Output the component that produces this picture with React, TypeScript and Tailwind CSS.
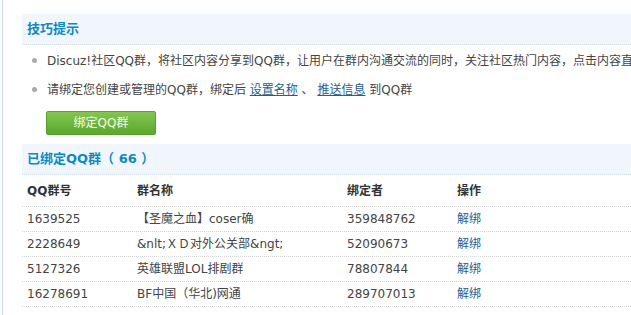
import React from "react";

const rows = [
  { id: "1639525", name: "【圣魔之血】coser确", owner: "359848762" },
  { id: "2228649", name: "&nlt;ＸＤ对外公关部&ngt;", owner: "52090673" },
  { id: "5127326", name: "英雄联盟LOL排剧群", owner: "78807844" },
  { id: "16278691", name: "BF中国（华北)网通", owner: "289707013" },
];

export default function App() {
  return (
    <div
      className="w-[631px] h-[315px] overflow-hidden bg-white text-[12px] text-[#444] whitespace-nowrap"
      style={{ fontFamily: '"DejaVu Sans", Verdana, "Noto Sans CJK SC", sans-serif' }}
    >
      <div className="ml-[2px] h-full border-l border-[#c3dcee] pl-[19px] pt-[14px]">
        <div className="h-[31px] bg-[#f1f6fc] border-b border-dotted border-[#d2e0ee] pl-[5px] flex items-center">
          <span className="text-[13px] font-bold text-[#0b8bbf]">技巧提示</span>
        </div>
        <ul className="pt-[1px]">
          <li className="h-[29px] flex items-center">
            <span className="shrink-0 ml-[10px] w-[5px] h-[5px] rounded-full bg-[#aaa]" />
            <span className="shrink-0 ml-[10px]">
              Discuz!社区QQ群，将社区内容分享到QQ群，让用户在群内沟通交流的同时，关注社区热门内容，点击内容直接进入社区
            </span>
          </li>
          <li className="h-[29px] flex items-center">
            <span className="shrink-0 ml-[10px] w-[5px] h-[5px] rounded-full bg-[#aaa]" />
            <span className="shrink-0 ml-[10px]">
              请绑定您创建或管理的QQ群，绑定后{" "}
              <a className="text-[#2a5c8c] underline">设置名称</a> 、{" "}
              <a className="text-[#2a5c8c] underline">推送信息</a> 到QQ群
            </span>
          </li>
        </ul>
        <div className="mt-[7px] ml-[24px] w-[110px] h-[24px] rounded-[2px] border border-[#5a9e2e] bg-gradient-to-b from-[#82c64f] to-[#5aa82c] flex items-center justify-center text-[12px] text-[#f4fbee]">
          绑定QQ群
        </div>
        <div className="mt-[9px] h-[31px] bg-[#f1f6fc] border-b border-dotted border-[#d2e0ee] pl-[5px] flex items-center">
          <span className="text-[13px] font-bold text-[#0b8bbf]">已绑定QQ群（ 66 ）</span>
        </div>
        <div className="h-[32px] flex items-center pl-[5px] font-bold text-[#333] border-b border-dotted border-[#d6d6d6]">
          <div className="w-[110px]">QQ群号</div>
          <div className="w-[210px]">群名称</div>
          <div className="w-[110px]">绑定者</div>
          <div>操作</div>
        </div>
        {rows.map((r) => (
          <div key={r.id} className="h-[25px] flex items-center pl-[5px] border-b border-dotted border-[#d6d6d6]">
            <div className="w-[110px]">{r.id}</div>
            <div className="w-[210px]">{r.name}</div>
            <div className="w-[110px]">{r.owner}</div>
            <div className="text-[#2a5c8c]">解绑</div>
          </div>
        ))}
      </div>
    </div>
  );
}
